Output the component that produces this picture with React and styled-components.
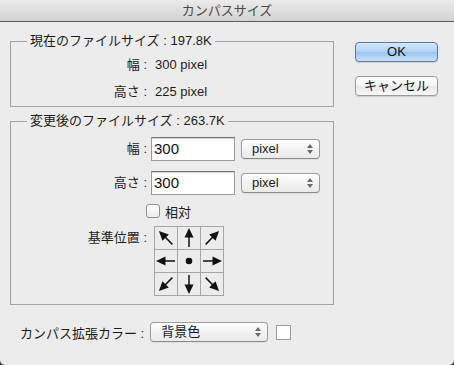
import React from 'react';
import styled, { createGlobalStyle } from 'styled-components';

const Global = createGlobalStyle`
  html, body {
    margin: 0;
    padding: 0;
    background: #3c3c3c;
  }
  body {
    font-family: "Liberation Sans", "Noto Sans CJK JP", sans-serif;
    font-size: 13px;
    color: #1c1c1c;
  }
`;

const Window = styled.div`
  width: 454px;
  height: 365px;
  background: #ececec;
  border-radius: 0 0 5px 5px;
  overflow: hidden;
  display: flex;
  flex-direction: column;
`;

const TitleBar = styled.div`
  height: 21px;
  border-bottom: 1px solid #5e5e5e;
  background: linear-gradient(#ebebeb, #d3d3d3);
  display: flex;
  align-items: center;
  justify-content: center;
  color: #4a4a4a;
  font-size: 13px;
  line-height: 21px;
`;

const Main = styled.div`
  display: flex;
  padding: 0 0 0 10px;
`;

const LeftCol = styled.div`
  width: 324px;
  display: flex;
  flex-direction: column;
`;

const RightCol = styled.div`
  display: flex;
  flex-direction: column;
  gap: 14px;
  padding: 20px 0 0 21px;
`;

const Group = styled.fieldset`
  margin: ${p => p.$top}px 0 0 0;
  padding: ${p => p.$pt}px 0 ${p => p.$pb}px 0;
  border: 1px solid #a4a4a4;
  min-inline-size: 0;
`;

const Legend = styled.legend`
  margin-left: 16px;
  padding: 0 3px;
  line-height: 16px;
  font-size: 13px;
`;

const Row = styled.div`
  display: flex;
  align-items: center;
  height: ${p => p.$h}px;
  margin-top: ${p => p.$mt || 0}px;
`;

const Label = styled.div`
  width: 136px;
  text-align: right;
  flex-shrink: 0;
  white-space: pre;
  line-height: ${p => p.$lh || 16}px;
  align-self: ${p => (p.$top ? 'flex-start' : 'center')};
`;

const Value = styled.div`
  margin-left: 8px;
`;

const TextInput = styled.div`
  margin-left: 4px;
  width: 84px;
  height: 24px;
  box-sizing: border-box;
  background: #fff;
  border: 1px solid #9c9c9c;
  border-top-color: #6f6f6f;
  box-shadow: inset 0 1px 1px rgba(0, 0, 0, 0.18);
  font-size: 15px;
  line-height: 22px;
  padding-left: 2px;
  color: #111;
`;

const Select = styled.div`
  margin-left: ${p => p.$ml}px;
  width: ${p => p.$w}px;
  height: 20px;
  box-sizing: border-box;
  border: 1px solid #9d9d9d;
  border-bottom-color: #8a8a8a;
  border-radius: 4px;
  background: linear-gradient(#ffffff, #f1f1f1 60%, #ebebeb);
  box-shadow: 0 1px 0 rgba(0, 0, 0, 0.05);
  display: flex;
  align-items: center;
  justify-content: space-between;
  padding: 0 6px 0 10px;
  font-size: 13px;
  line-height: 18px;
`;

const Stepper = styled.svg`
  width: 6px;
  height: 10px;
  flex-shrink: 0;
`;

const Check = styled.div`
  margin-left: 135px;
  width: 14px;
  height: 14px;
  box-sizing: border-box;
  border: 1px solid #8e8e8e;
  border-radius: 3px;
  background: linear-gradient(#ffffff, #ececec);
`;

const CheckLabel = styled.span`
  margin-left: 5px;
`;

const AnchorGrid = styled.div`
  margin-left: 7px;
  display: grid;
  grid-template-columns: repeat(3, 22px);
  grid-template-rows: repeat(3, 22px);
  gap: 1px;
  padding: 1px;
  background: #a6a6a6;
`;

const Cell = styled.div`
  background: #ececec;
  display: flex;
  align-items: center;
  justify-content: center;
`;

const BottomRow = styled.div`
  display: flex;
  align-items: center;
  padding: 17px 0 0 20px;
  height: 20px;
`;

const Swatch = styled.div`
  margin-left: 8px;
  width: 15px;
  height: 15px;
  box-sizing: border-box;
  background: #fff;
  border: 1px solid #9a9a9a;
`;

const Button = styled.div`
  width: 83px;
  height: 20px;
  box-sizing: border-box;
  border-radius: 4px;
  border: 1px solid ${p => (p.$primary ? '#5b78ad' : '#9a9a9a')};
  background: ${p =>
    p.$primary
      ? 'linear-gradient(#d6e8fb, #afd2f6 50%, #98c5f2 51%, #c9e2fb)'
      : 'linear-gradient(#ffffff, #f3f3f3 50%, #e9e9e9 51%, #f7f7f7)'};
  box-shadow: 0 1px 1px rgba(0, 0, 0, 0.12);
  display: flex;
  align-items: center;
  justify-content: center;
  font-size: 13px;
  line-height: 18px;
  color: #111;
`;

const StepIcon = () => (
  <Stepper viewBox="0 0 6 10">
    <path d="M3 0 L6 4 L0 4 Z M0 6 L6 6 L3 10 Z" fill="#6a6a6a" />
  </Stepper>
);

const Arrow = ({ angle }) => (
  <svg width="22" height="22" viewBox="0 0 22 22">
    <g transform={`rotate(${angle} 11 11)`}>
      <line x1="11" y1="20" x2="11" y2="9" stroke="#111" strokeWidth="1.5" />
      <path d="M11 1 L15.5 10.5 L6.5 10.5 Z" fill="#111" />
    </g>
  </svg>
);

const Dot = () => (
  <svg width="22" height="22" viewBox="0 0 22 22">
    <circle cx="11" cy="11" r="3.3" fill="#111" />
  </svg>
);

const anchors = [-45, 0, 45, -90, null, 90, -135, 180, 135];

const App = () => (
  <>
    <Global />
    <Window>
      <TitleBar>カンパスサイズ</TitleBar>
      <Main>
        <LeftCol>
          <Group $top={11} $pt={2} $pb={1}>
            <Legend>現在のファイルサイズ : 197.8K</Legend>
            <Row $h={27}>
              <Label>幅 :</Label>
              <Value>300 pixel</Value>
            </Row>
            <Row $h={27}>
              <Label>高さ :</Label>
              <Value>225 pixel</Value>
            </Row>
          </Group>
          <Group $top={6} $pt={8} $pb={8}>
            <Legend>変更後のファイルサイズ : 263.7K</Legend>
            <Row $h={24}>
              <Label>幅 :</Label>
              <TextInput>300</TextInput>
              <Select $ml={6} $w={79}>
                pixel
                <StepIcon />
              </Select>
            </Row>
            <Row $h={24} $mt={10}>
              <Label>高さ :</Label>
              <TextInput>300</TextInput>
              <Select $ml={6} $w={79}>
                pixel
                <StepIcon />
              </Select>
            </Row>
            <Row $h={16} $mt={8}>
              <Check />
              <CheckLabel>相対</CheckLabel>
            </Row>
            <Row $h={70} $mt={7}>
              <Label $top $lh={23}>基準位置 :</Label>
              <AnchorGrid>
                {anchors.map((a, i) => (
                  <Cell key={i}>{a === null ? <Dot /> : <Arrow angle={a} />}</Cell>
                ))}
              </AnchorGrid>
            </Row>
          </Group>
        </LeftCol>
        <RightCol>
          <Button $primary>OK</Button>
          <Button>キャンセル</Button>
        </RightCol>
      </Main>
      <BottomRow>
        カンパス拡張カラー :
        <Select $ml={6} $w={118}>
          背景色
          <StepIcon />
        </Select>
        <Swatch />
      </BottomRow>
    </Window>
  </>
);

export default App;
